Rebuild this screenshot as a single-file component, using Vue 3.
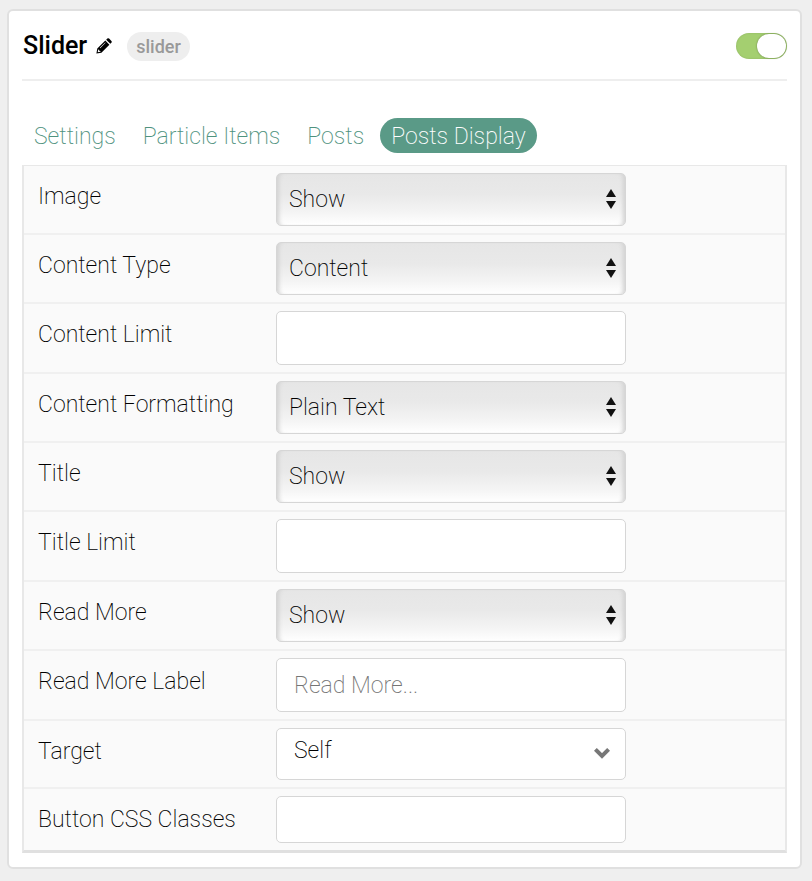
<script setup>
import { ref } from 'vue'

const title = ref('Slider')
const enabled = ref(true)
const activeTab = ref('Posts Display')
const tabs = ['Settings', 'Particle Items', 'Posts', 'Posts Display']

const fields = ref([
  { id: 'image', label: 'Image', type: 'select', value: 'Show', options: ['Show', 'Hide'] },
  { id: 'content-type', label: 'Content Type', type: 'select', value: 'Content', options: ['Content', 'Introduction', 'Hide'] },
  { id: 'content-limit', label: 'Content Limit', type: 'text', value: '' },
  { id: 'content-formatting', label: 'Content Formatting', type: 'select', value: 'Plain Text', options: ['Plain Text', 'HTML'] },
  { id: 'title', label: 'Title', type: 'select', value: 'Show', options: ['Show', 'Hide'] },
  { id: 'title-limit', label: 'Title Limit', type: 'text', value: '' },
  { id: 'read-more', label: 'Read More', type: 'select', value: 'Show', options: ['Show', 'Hide'] },
  { id: 'read-more-label', label: 'Read More Label', type: 'text', value: '', placeholder: 'Read More...' },
  { id: 'target', label: 'Target', type: 'picker', value: 'Self', options: ['Self', 'New Window'] },
  { id: 'button-classes', label: 'Button CSS Classes', type: 'short', value: '' }
])
</script>

<template>
  <main class="card">
    <header class="head">
      <h1 class="name">{{ title }}</h1>
      <button class="edit" type="button" aria-label="Edit title">
        <svg viewBox="0 0 16 16" width="16" height="16" aria-hidden="true">
          <path fill="#000" fill-rule="evenodd" d="M0.4 15.6 1.3 10.6 9.3 2.6 13.4 6.7 5.4 14.7ZM1.7 14.3 4.3 13.8 4.6 12.9 3.2 12.7 3 11.4 2.2 11.7ZM4.2 10.2 9.6 4.8 9.2 4.4 3.8 9.8ZM10.2 1.7 11.3 0.6Q12.2-.2 13.1.6L15.4 2.9Q16.2 3.8 15.4 4.7L14.3 5.8Z" />
        </svg>
      </button>
      <span class="tag">slider</span>
      <label class="toggle">
        <input v-model="enabled" type="checkbox" aria-label="Enabled" />
        <span class="knob"></span>
      </label>
    </header>

    <nav class="tabs">
      <a
        v-for="tab in tabs"
        :key="tab"
        href="#"
        class="tab"
        :class="{ active: tab === activeTab }"
        @click.prevent="activeTab = tab"
      >{{ tab }}</a>
    </nav>

    <form class="panel" @submit.prevent>
      <div v-for="field in fields" :key="field.id" class="row">
        <label class="label" :for="field.id">{{ field.label }}</label>
        <div class="control">
          <template v-if="field.type === 'select' || field.type === 'picker'">
            <select :id="field.id" v-model="field.value" :class="field.type">
              <option v-for="option in field.options" :key="option">{{ option }}</option>
            </select>
            <svg v-if="field.type === 'select'" class="arrows" viewBox="0 0 10 20" width="10" height="20" aria-hidden="true">
              <path fill="#111" d="M5 0 10 8H0ZM0 12H10L5 20Z" />
            </svg>
            <svg v-else class="chevron" viewBox="0 0 16 11" width="16" height="11" aria-hidden="true">
              <path fill="none" stroke="#777" stroke-width="4" d="M1.4 1.4 8 8 14.6 1.4" />
            </svg>
          </template>
          <input v-else :id="field.id" v-model="field.value" type="text" :class="field.type" :placeholder="field.placeholder" />
        </div>
      </div>
    </form>
  </main>
</template>

<style>
body {
  background: #efefef;
}
</style>

<style scoped>
.card {
  box-sizing: border-box;
  margin: 9px 10px 12px 7px;
  padding: 0 13px 14px;
  background: #fff;
  border: 2px solid #e0e0e0;
  border-radius: 6px;
  font-family: Roboto, "Liberation Sans", sans-serif;
  font-weight: 200;
  font-size: 23px;
  line-height: 28px;
  color: #000;
}

.head {
  display: flex;
  align-items: center;
  height: 66px;
  padding: 2px 0 0 1px;
  border-bottom: 2px solid #eee;
}

.name {
  margin: 0;
  font-size: 25px;
  font-weight: 500;
  color: #000;
}

.edit {
  display: flex;
  margin-left: 9px;
  padding: 0;
  border: 0;
  background: none;
}

.tag {
  margin-left: 15px;
  padding: 0 9px;
  border-radius: 15px;
  background: #eee;
  color: #999;
  font-size: 18px;
  font-weight: 500;
  line-height: 29px;
}

.toggle {
  display: flex;
  justify-content: flex-end;
  box-sizing: border-box;
  width: 51px;
  height: 26px;
  margin-left: auto;
  padding: 1px;
  border-radius: 13px;
  background: #a4cf70;
  box-shadow: inset 0 0 2px rgba(0, 0, 0, 0.15);
}

.toggle:not(:has(:checked)) {
  justify-content: flex-start;
  background: #ccc;
}

.toggle input {
  position: absolute;
  margin: 0;
  opacity: 0;
}

.knob {
  width: 29px;
  height: 24px;
  border-radius: 12px;
  background: #fff;
  box-shadow: 0 0 2px rgba(0, 0, 0, 0.4);
}

.tabs {
  display: flex;
  gap: 5px;
  margin-top: 37px;
  padding: 0 0 12px 1px;
}

.tab {
  padding: 2px 11px 0;
  border-radius: 18px;
  color: #4f927e;
  line-height: 33px;
  text-decoration: none;
}

.tab.active {
  background: #5a9a87;
  color: #fff;
}

.panel {
  border: 2px solid #e8e8e8;
  border-top-width: 1px;
  border-bottom: 3px solid #e0e0e0;
  background: #fafafa;
}

.row {
  display: flex;
  padding: 7px 14px;
  border-bottom: 2px solid #f0f0f0;
}

.row:last-child {
  border-bottom: 0;
}

.label {
  flex: none;
  width: 238px;
  padding-top: 10px;
}

.control {
  position: relative;
  width: 350px;
}

.select,
.picker,
.text,
.short {
  display: block;
  box-sizing: border-box;
  width: 100%;
  height: 53px;
  margin: 0;
  border: 1px solid #d6d6d6;
  border-radius: 5px;
  background: #fff;
  color: #000;
  font: inherit;
  appearance: none;
}

.select {
  padding: 0 33px 0 12px;
  background: linear-gradient(#e6e6e6, #e9e9e9 40%, #f4f4f4 75%, #fff);
  box-shadow: inset 5px 0 4px -3px #d2d2d2, inset -5px 0 4px -3px #d2d2d2;
}

.picker {
  height: 52px;
  padding: 0 41px 6px 17px;
}

.text,
.short {
  height: 54px;
  padding: 0 17px;
}

.short {
  height: 47px;
}

.text::placeholder {
  color: #757575;
  opacity: 1;
}

.arrows,
.chevron {
  position: absolute;
  top: 16px;
  right: 10px;
  pointer-events: none;
}

.chevron {
  top: 20px;
  right: 16px;
}
</style>
